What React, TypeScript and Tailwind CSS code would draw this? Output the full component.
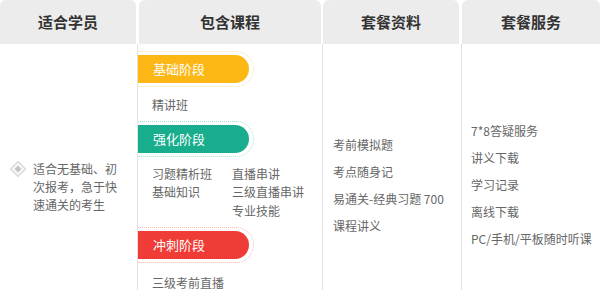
const font = { fontFamily: '"Noto Sans CJK SC", "Noto Sans", sans-serif' };

function Head({ title, className }: { title: string; className: string }) {
  return (
    <div
      className={`h-[44px] bg-[#ececec] rounded-t-[6px] flex items-center justify-center text-[15px] font-bold text-[#333] ${className}`}
    >
      {title}
    </div>
  );
}

interface PillProps {
  label: string;
  fill: string;
  ring: string;
}

function Pill({ label, fill, ring }: PillProps) {
  return (
    <div className={`w-[116px] h-[36px] py-[3px] pr-[4px] border border-l-0 border-dotted rounded-r-full ${ring}`}>
      <div className={`h-full rounded-r-full flex items-center pl-[15px] text-[13px] text-white ${fill}`}>
        {label}
      </div>
    </div>
  );
}

function Diamond() {
  return (
    <svg width="18" height="18" viewBox="0 0 18 18" className="shrink-0">
      <path d="M9 1.5 L16.5 9 L9 16.5 L1.5 9 Z" fill="#f7f7f7" stroke="#d6d6d6" strokeWidth="1.2" />
      <path d="M9 5.5 L12.5 9 L9 12.5 L5.5 9 Z" fill="#c4c4c4" />
    </svg>
  );
}

export default function App() {
  const materials = ['考前模拟题', '考点随身记', '易通关-经典习题 700', '课程讲义'];
  const services = ['7*8答疑服务', '讲义下载', '学习记录', '离线下载', 'PC/手机/平板随时听课'];

  return (
    <div className="w-[600px] h-[290px] overflow-hidden bg-white" style={font}>
      <div className="grid grid-cols-[137px_185px_139px_139px] h-full">
        {/* 适合学员 */}
        <div className="flex flex-col">
          <Head title="适合学员" className="mr-[1px]" />
          <div className="flex-1 pt-[116px] pl-[9px] flex items-start gap-[6px]">
            <div className="mt-0">
              <Diamond />
            </div>
            <p className="w-[86px] text-[12px] leading-[18px] text-[#666]">
              适合无基础、初次报考，急于快速通关的考生
            </p>
          </div>
        </div>

        {/* 包含课程 */}
        <div className="flex flex-col">
          <Head title="包含课程" className="ml-[2px] mr-[1px]" />
          <div className="flex-1 border-l border-[#e2e2e2] pt-[7px] text-[12px] text-[#666]">
            <Pill label="基础阶段" fill="bg-[#fdb714]" ring="border-[#fbe2a0]" />
            <div className="mt-[9px] pl-[14px] leading-[18px]">精讲班</div>
            <div className="mt-[7px]">
              <Pill label="强化阶段" fill="bg-[#18ad8d]" ring="border-[#a8e2d4]" />
            </div>
            <div className="mt-[8px] pl-[14px] grid grid-cols-[80px_1fr] leading-[18px]">
              <div>
                <div>习题精析班</div>
                <div>基础知识</div>
              </div>
              <div>
                <div>直播串讲</div>
                <div>三级直播串讲</div>
                <div className="mt-[1px]">专业技能</div>
              </div>
            </div>
            <div className="mt-[7px]">
              <Pill label="冲刺阶段" fill="bg-[#ef3c37]" ring="border-[#f5b9b6]" />
            </div>
            <div className="mt-[11px] pl-[14px] leading-[18px]">三级考前直播</div>
          </div>
        </div>

        {/* 套餐资料 */}
        <div className="flex flex-col">
          <Head title="套餐资料" className="ml-[1px] mr-[2px]" />
          <div className="flex-1 border-l border-[#e2e2e2] pt-[87px] pl-[10px] text-[12px] text-[#666]">
            {materials.map((m) => (
              <div key={m} className="leading-[27px]">{m}</div>
            ))}
          </div>
        </div>

        {/* 套餐服务 */}
        <div className="flex flex-col">
          <Head title="套餐服务" className="ml-[1px]" />
          <div className="flex-1 border-l border-[#e2e2e2] pt-[73px] pl-[9px] text-[12px] text-[#666]">
            {services.map((s) => (
              <div key={s} className="leading-[27px]">{s}</div>
            ))}
          </div>
        </div>
      </div>
    </div>
  );
}
